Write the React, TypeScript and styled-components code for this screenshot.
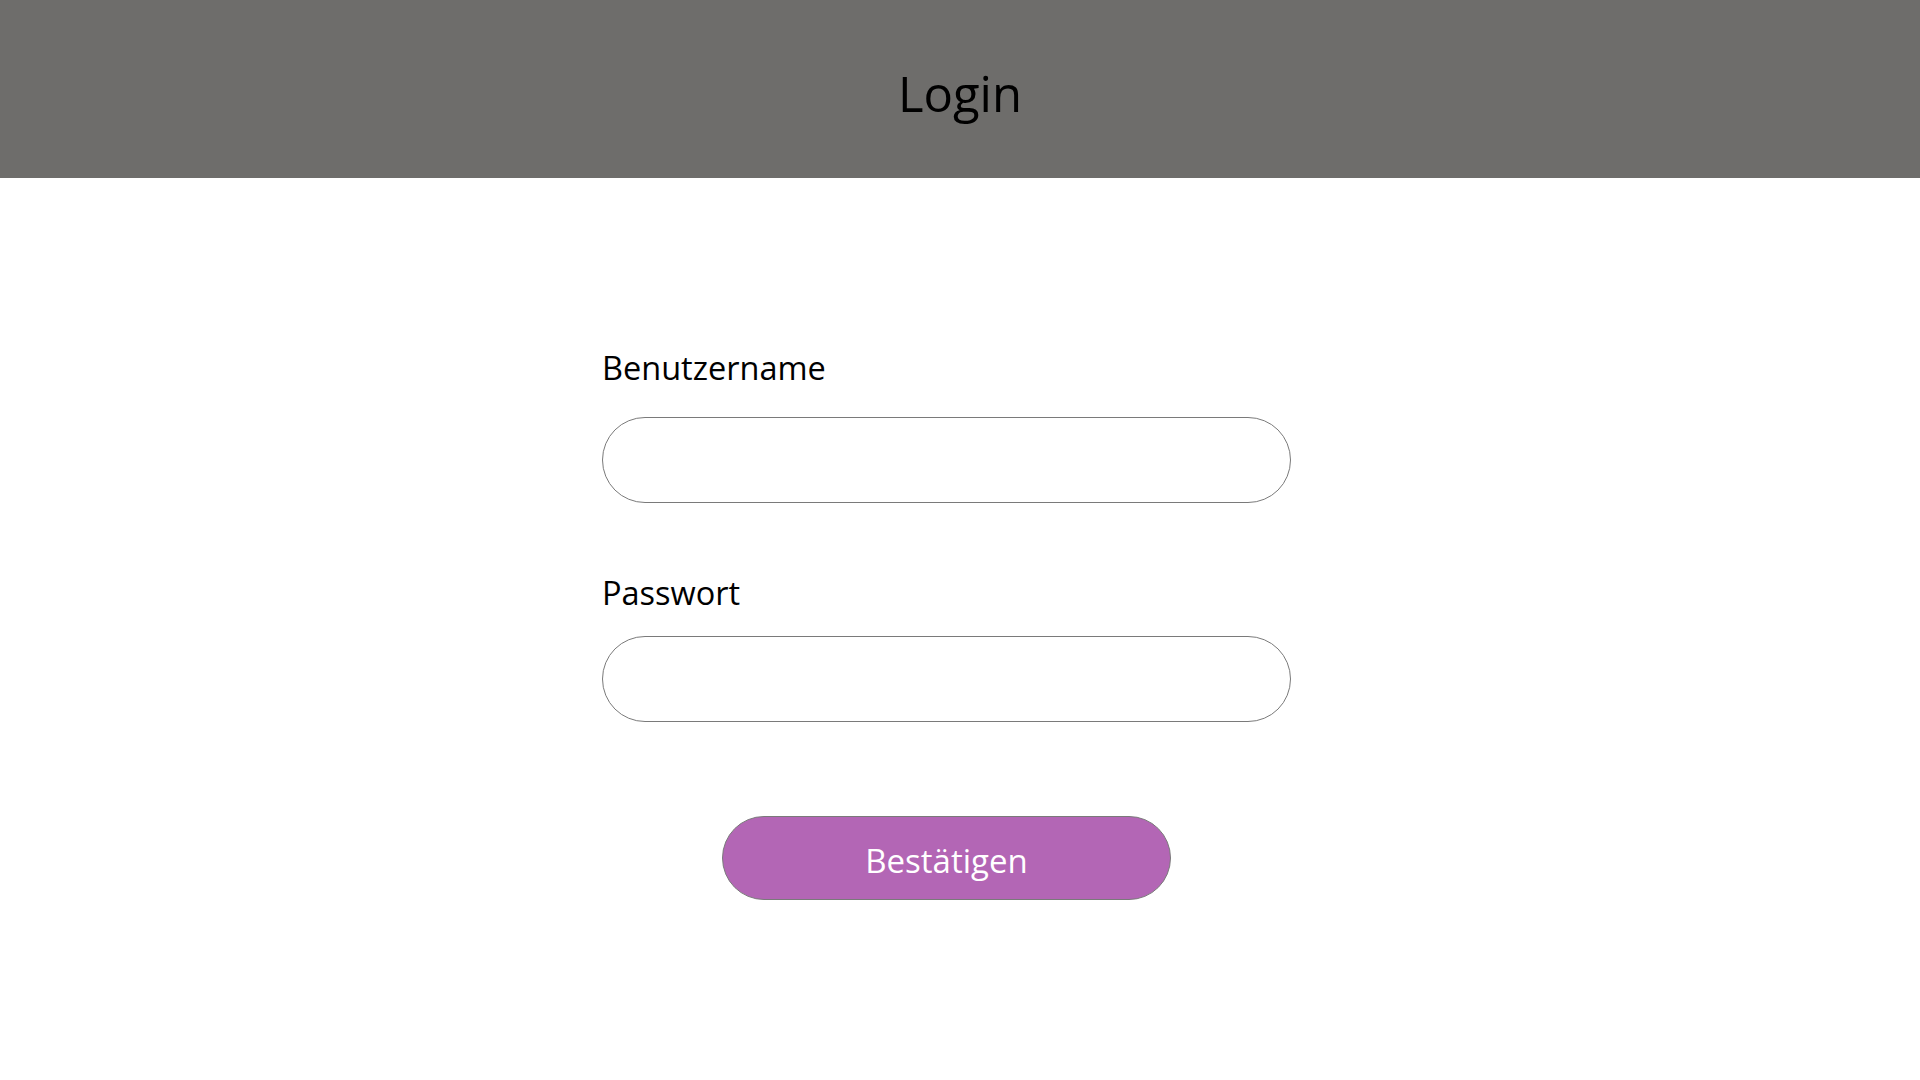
import React from 'react';
import styled, { createGlobalStyle } from 'styled-components';

const GlobalStyle = createGlobalStyle`
  html, body {
    margin: 0;
    padding: 0;
    background: #ffffff;
    font-family: 'Open Sans', 'Noto Sans', sans-serif;
  }
`;

const Page = styled.div`
  width: 1920px;
  min-height: 1080px;
  display: flex;
  flex-direction: column;
`;

const Header = styled.header`
  height: 178px;
  background: #6e6d6b;
  display: flex;
  align-items: center;
  justify-content: center;
  padding-top: 8px;
  box-sizing: border-box;
`;

const Title = styled.h1`
  margin: 0;
  font-size: 49px;
  line-height: 1;
  font-weight: 400;
  color: #000;
`;

const Form = styled.form`
  width: 716px;
  margin: 0 auto;
  padding: 173px 27px 0 0;
  box-sizing: border-box;
  display: flex;
  flex-direction: column;
`;

const Label = styled.label<{ $top: number; $gap: number }>`
  display: block;
  margin: ${p => p.$top}px 0 ${p => p.$gap}px 0;
  font-size: 32.5px;
  line-height: 33px;
  color: #000;
`;

const Input = styled.input`
  width: 100%;
  height: 86px;
  box-sizing: border-box;
  border: 1px solid #7a7a7a;
  border-radius: 43px;
  background: #fff;
  padding: 0 40px;
  font-family: inherit;
  font-size: 30px;
  outline: none;
`;

const Submit = styled.button`
  align-self: center;
  margin-top: 94px;
  width: 449px;
  height: 84px;
  border: 1px solid #7a7a7a;
  border-radius: 42px;
  background: #b366b5;
  color: #fff;
  font-family: inherit;
  font-size: 33px;
  line-height: 1;
  padding: 4px 0 0;
  cursor: pointer;
`;

const App = () => {
  return (
    <React.Fragment>
      <GlobalStyle />
      <Page>
        <Header>
          <Title>Login</Title>
        </Header>
        <Form onSubmit={ e => e.preventDefault() }>
          <Label htmlFor="user" $top={ 0 } $gap={ 33 }>Benutzername</Label>
          <Input id="user" type="text" />
          <Label htmlFor="pass" $top={ 73 } $gap={ 27 }>Passwort</Label>
          <Input id="pass" type="password" />
          <Submit type="submit">Bestätigen</Submit>
        </Form>
      </Page>
    </React.Fragment>
  );
};

export default App;
